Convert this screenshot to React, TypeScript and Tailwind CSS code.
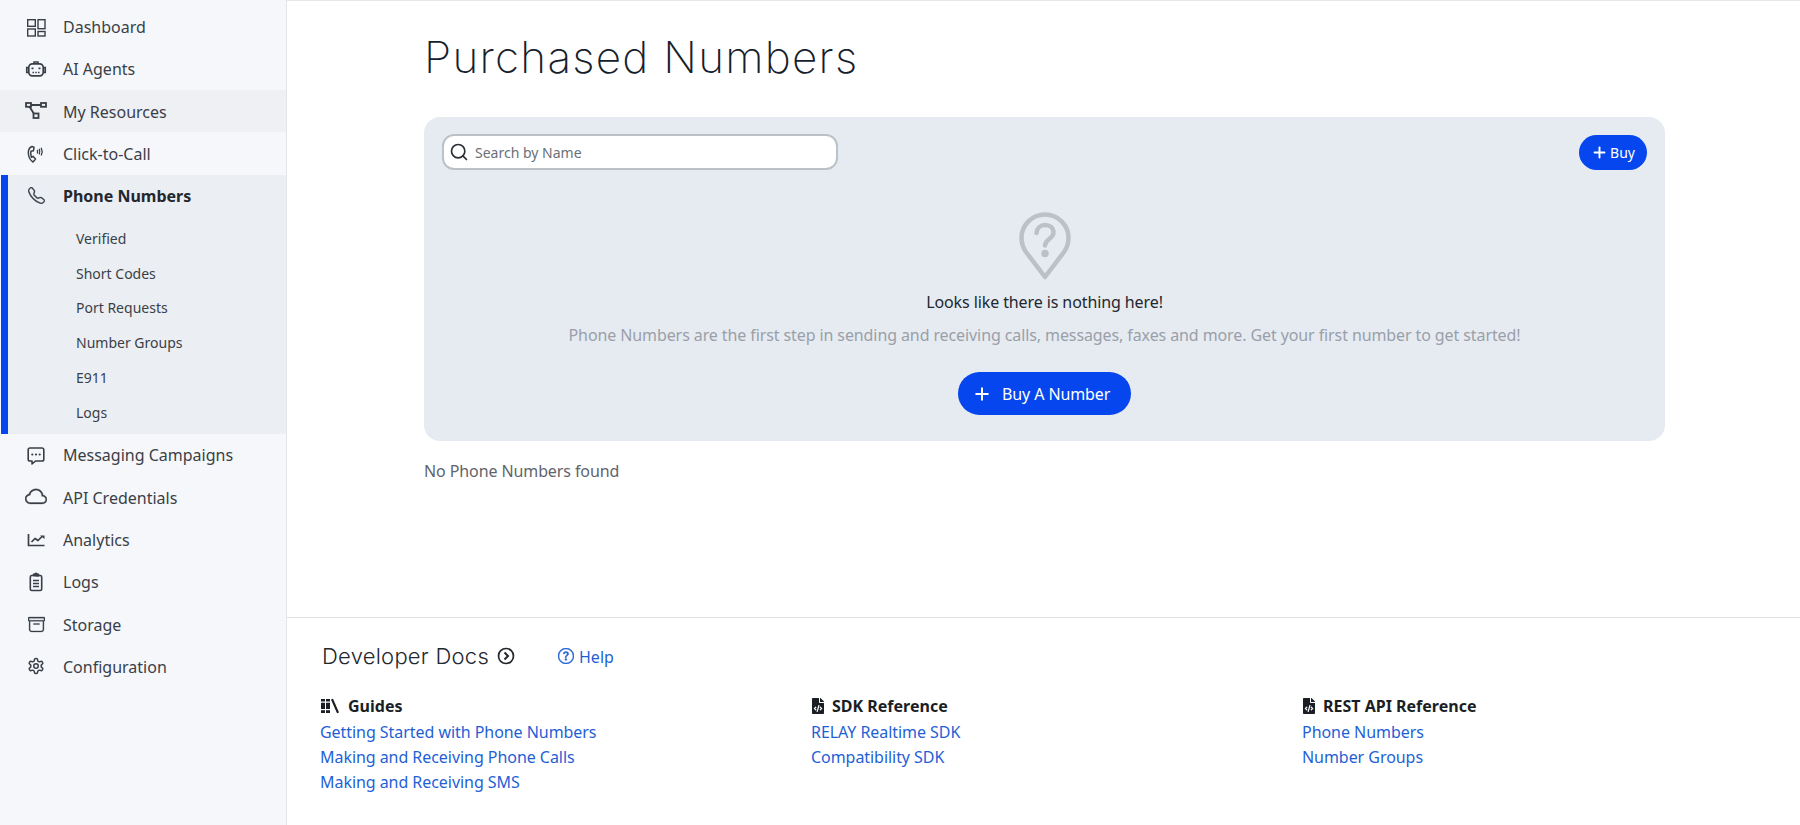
import { useState } from "react";
import type { ReactNode } from "react";
import { BsCloud, BsArchive, BsQuestionCircle, BsTelephone } from "react-icons/bs";
import { FaFileCode } from "react-icons/fa";
import { LuSettings, LuSearch, LuPlus } from "react-icons/lu";

const DashIcon = () => (
  <svg width="22" height="22" viewBox="0 0 22 22" fill="none" stroke="currentColor" strokeWidth="1.4">
    <rect x="2.700" y="3.700" width="7.600" height="6.600" />
    <rect x="2.700" y="13" width="7.600" height="7" />
    <rect x="13" y="3.700" width="7" height="9" />
    <rect x="13" y="15.500" width="7" height="4.500" />
  </svg>
);

const BotIcon = () => (
  <svg width="22" height="22" viewBox="0 0 22 22" fill="none" stroke="currentColor" strokeWidth="1.7">
    <rect x="3.800" y="5.800" width="14.400" height="12" rx="3.500" />
    <path d="M9 5.500V4h4v1.500" strokeWidth="1.500" />
    <path d="M3.500 9.500H1.800v5h1.700M18.500 9.500h1.700v5h-1.700" />
    <path d="M7.500 9.500v1.800M14.500 9.500v1.800" strokeWidth="2" />
    <path d="M7.500 14.500h1.500M10.300 14.500h1.500M13 14.500h1.500" strokeWidth="1.500" />
  </svg>
);

const NodesIcon = () => (
  <svg width="22" height="22" viewBox="0 0 22 22" fill="none" stroke="currentColor" strokeWidth="1.800">
    <rect x="1" y="3" width="5" height="3.800" />
    <rect x="16" y="3" width="5" height="3.800" />
    <rect x="8.500" y="13.500" width="5" height="4.500" />
    <path d="M6 5h10M4.500 6.800l4.500 7" />
  </svg>
);

const CallIcon = () => (
  <svg width="22" height="22" viewBox="0 0 22 22" fill="none" stroke="currentColor" strokeWidth="1.500" strokeLinecap="round" strokeLinejoin="round">
    <path d="M6 4C3.500 5.500 3 8 3.500 11.500 4 15 5.500 17.500 8 19l2.500-3L8 13.300l-1.600 1c-.7-2-.9-4-.5-6l2.600-.6L9 4.200 7 3.500z" />
    <path d="M12.500 7.500v2.500" strokeWidth="1.300" />
    <path d="M14.300 6.300c.6 1.300.6 3 0 4.600" strokeWidth="1.300" />
    <path d="M16.300 5.300c1 2 1 4.700 0 6.700" strokeWidth="1.300" />
  </svg>
);

const ChatIcon = () => (
  <svg width="22" height="22" viewBox="0 0 22 22" fill="none" stroke="currentColor" strokeWidth="1.600" strokeLinejoin="round">
    <path d="M5 4h12a1.800 1.800 0 0 1 1.800 1.800v9.400A1.800 1.800 0 0 1 17 17h-6.500l-3.500 3v-3H5a1.800 1.800 0 0 1-1.800-1.800V5.800A1.800 1.800 0 0 1 5 4z" />
    <path d="M7.300 10.500h.01M11 10.500h.01M14.700 10.500h.01" strokeWidth="2.200" strokeLinecap="round" />
  </svg>
);

const ChartIcon = () => (
  <svg width="22" height="22" viewBox="0 0 22 22" fill="none" stroke="currentColor" strokeWidth="1.700" strokeLinejoin="round">
    <path d="M3.500 5v11.500h16" />
    <path d="M6.500 13l3.500-3.500 3 2 4-4" />
    <path d="M15 6.500h4.500V10z" fill="currentColor" stroke="none" />
  </svg>
);

const ClipboardIcon = () => (
  <svg width="22" height="22" viewBox="0 0 22 22" fill="none" stroke="currentColor" strokeWidth="1.600" strokeLinejoin="round">
    <rect x="5.300" y="4.500" width="11.400" height="15" rx="1.500" />
    <path d="M8.500 4.500V3.200h1.500a1 1 0 0 1 2 0h1.500v1.800z" fill="currentColor" />
    <path d="M8 9.500h6M8 12.500h6M8 15.500h6" strokeWidth="1.300" />
  </svg>
);

const PinQuestion = () => (
  <svg width="52" height="68" viewBox="0 0 52 68" fill="none" stroke="#bcc1c9" strokeWidth="4.500" strokeLinecap="round" strokeLinejoin="round">
    <path d="M26 65 7 40C3.500 35 2.500 30 2.500 26a23.500 23.500 0 0 1 47 0c0 4-1 9-4.500 14z" />
    <path d="M17.500 21c.5-5 4-8 8.500-8 5 0 8.500 3 8.500 7.500 0 6.500-8.500 6.500-8.500 13" />
    <circle cx="26" cy="41.500" r="1.500" fill="#bcc1c9" />
  </svg>
);

const BooksIcon = () => (
  <svg width="18" height="16" viewBox="0 0 18 16" fill="currentColor" className="ml-[1px] mr-[3px]">
    <rect x="0" y="1" width="4" height="14" />
    <rect x="5" y="1" width="4" height="14" />
    <rect x="0" y="3.500" width="9" height="1.200" fill="#fff" />
    <rect x="0" y="11" width="9" height="1.200" fill="#fff" />
    <polygon points="10,1.500 12,0.800 18,14.500 16,15.300" />
  </svg>
);

const CircleArrow = () => (
  <svg width="18" height="18" viewBox="0 0 18 18" fill="none" stroke="currentColor" strokeWidth="1.700">
    <circle cx="9" cy="9" r="7.500" />
    <path d="M7.500 5.500 11 9l-3.500 3.500" strokeWidth="2" />
  </svg>
);

interface NavItem {
  label: string;
  icon: ReactNode;
  active?: boolean;
  hover?: boolean;
  children?: string[];
}

const navItems: NavItem[] = [
  { label: "Dashboard", icon: <DashIcon /> },
  { label: "AI Agents", icon: <BotIcon /> },
  { label: "My Resources", icon: <NodesIcon />, hover: true },
  { label: "Click-to-Call", icon: <CallIcon /> },
  {
    label: "Phone Numbers",
    icon: <BsTelephone size={17} stroke="currentColor" strokeWidth={0.3} />,
    active: true,
    children: ["Verified", "Short Codes", "Port Requests", "Number Groups", "E911", "Logs"],
  },
  { label: "Messaging Campaigns", icon: <ChatIcon /> },
  { label: "API Credentials", icon: <BsCloud size={22} stroke="currentColor" strokeWidth={0.25} /> },
  { label: "Analytics", icon: <ChartIcon /> },
  { label: "Logs", icon: <ClipboardIcon /> },
  { label: "Storage", icon: <BsArchive size={17} stroke="currentColor" strokeWidth={0.3} /> },
  { label: "Configuration", icon: <LuSettings size={18} strokeWidth={2} /> },
];

const docCols = [
  {
    title: "Guides",
    icon: <BooksIcon />,
    links: ["Getting Started with Phone Numbers", "Making and Receiving Phone Calls", "Making and Receiving SMS"],
  },
  { title: "SDK Reference", icon: <FaFileCode size={16} className="-ml-[1px]" />, links: ["RELAY Realtime SDK", "Compatibility SDK"] },
  { title: "REST API Reference", icon: <FaFileCode size={16} className="-ml-[1px]" />, links: ["Phone Numbers", "Number Groups"] },
];

function Sidebar() {
  return (
    <aside className="w-[287px] shrink-0 bg-[#f5f7fb] border-r border-[#e3e5ea] pt-[5.500px] text-[16px] text-[#3a3f47]">
      {navItems.map((item) =>
        item.children ? (
          <div key={item.label} className="ml-[1px] border-l-[7px] border-[#0546ee] bg-[#ebeef3]">
            <div className="flex items-center h-[42.300px]">
              <span className="w-[55px] pl-[17px]">
                <span className="w-[22px] flex justify-center">{item.icon}</span>
              </span>
              <span className="pt-[1px] font-bold text-[#23272e]">{item.label}</span>
            </div>
            <div className="pt-[4px] pb-[4px]">
              {item.children.map((c) => (
                <div key={c} className="flex items-center h-[34.800px] pl-[68px] text-[14px]">
                  {c}
                </div>
              ))}
            </div>
          </div>
        ) : (
          <div key={item.label} className={`flex items-center h-[42.300px] ${item.hover ? "bg-[#eef0f4]" : ""}`}>
            <span className="w-[63px] pl-[25px]">
              <span className="w-[22px] flex justify-center">{item.icon}</span>
            </span>
            <span className="pt-[1px]">{item.label}</span>
          </div>
        )
      )}
    </aside>
  );
}

export default function App() {
  const [query, setQuery] = useState("");

  return (
    <div className="flex h-[825px] overflow-hidden bg-white font-['Noto_Sans','Open_Sans',sans-serif]">
      <Sidebar />
      <main className="flex-1 flex flex-col border-t border-[#e6e8ec]">
        <div className="h-[616px] pl-[137px] pr-[135px] shrink-0">
          <h1 className="pt-[27px] h-[116px] text-[44px] leading-[58px] font-extralight text-[#16202c] font-['Inter',sans-serif] tracking-[1.250px]">
            Purchased Numbers
          </h1>
          <section className="h-[324px] rounded-[16px] bg-[#e6ebf2] px-[18px] pt-[17px]">
            <div className="flex justify-between items-center">
              <label className="flex items-center gap-[6px] w-[396px] h-[36px] px-[5px] rounded-[12px] border-2 border-[#bcc1c9] bg-white">
                <LuSearch size={20} className="text-[#2a2f36]" />
                <input
                  value={query}
                  onChange={(e) => setQuery(e.target.value)}
                  placeholder="Search by Name"
                  className="flex-1 text-[14px] outline-none placeholder:text-[#6b7078]"
                />
              </label>
              <button className="flex items-center gap-[2px] h-[35px] w-[68px] justify-center rounded-full bg-[#0546ee] text-white text-[14px]">
                <LuPlus size={17} strokeWidth={2.700} /> Buy
              </button>
            </div>
            <div className="flex flex-col items-center pt-[42px] tracking-[-0.1px]">
              <PinQuestion />
              <p className="mt-[11px] text-[16px] leading-[22px] text-[#23272e]">Looks like there is nothing here!</p>
              <p className="mt-[11px] text-[16px] leading-[22px] text-[#9a9fa8]">
                Phone Numbers are the first step in sending and receiving calls, messages, faxes and more. Get your first number to get started!
              </p>
              <button className="mt-[26px] flex items-center gap-[10px] h-[43px] w-[173px] pl-[14px] rounded-full bg-[#0546ee] text-white text-[16px]">
                <LuPlus size={20} strokeWidth={2.400} /> Buy A Number
              </button>
            </div>
          </section>
          <p className="mt-[19px] text-[16px] leading-[22px] tracking-[-0.1px] text-[#5f646c]">No Phone Numbers found</p>
        </div>
        <footer className="flex-1 border-t border-[#dfe1e5] pl-[33px]">
          <div className="flex items-center pt-[25px] pl-[2px]">
            <h2 className="flex items-center gap-[8px] w-[236px] text-[22px] leading-[26px] font-light text-[#23272e] font-['Inter',sans-serif] tracking-[0.25px]">
              Developer Docs <CircleArrow />
            </h2>
            <a className="flex items-center gap-[5px] text-[16px] text-[#1f5fd6]">
              <BsQuestionCircle size={16} stroke="currentColor" strokeWidth={0.4} />
              <span className="pt-[2px]">Help</span>
            </a>
          </div>
          <div className="grid grid-cols-[491px_491px_1fr] mt-[24px]">
            {docCols.map((col) => (
              <div key={col.title}>
                <div className="flex items-center gap-[6px] h-[27px] pb-[2px] font-bold text-[16px] text-[#1b1f25]">
                  {col.icon}
                  {col.title}
                </div>
                {col.links.map((l) => (
                  <a key={l} className="block h-[25px] text-[16px] leading-[25px] tracking-[-0.05px] text-[#1f5fd6]">
                    {l}
                  </a>
                ))}
              </div>
            ))}
          </div>
        </footer>
      </main>
    </div>
  );
}
